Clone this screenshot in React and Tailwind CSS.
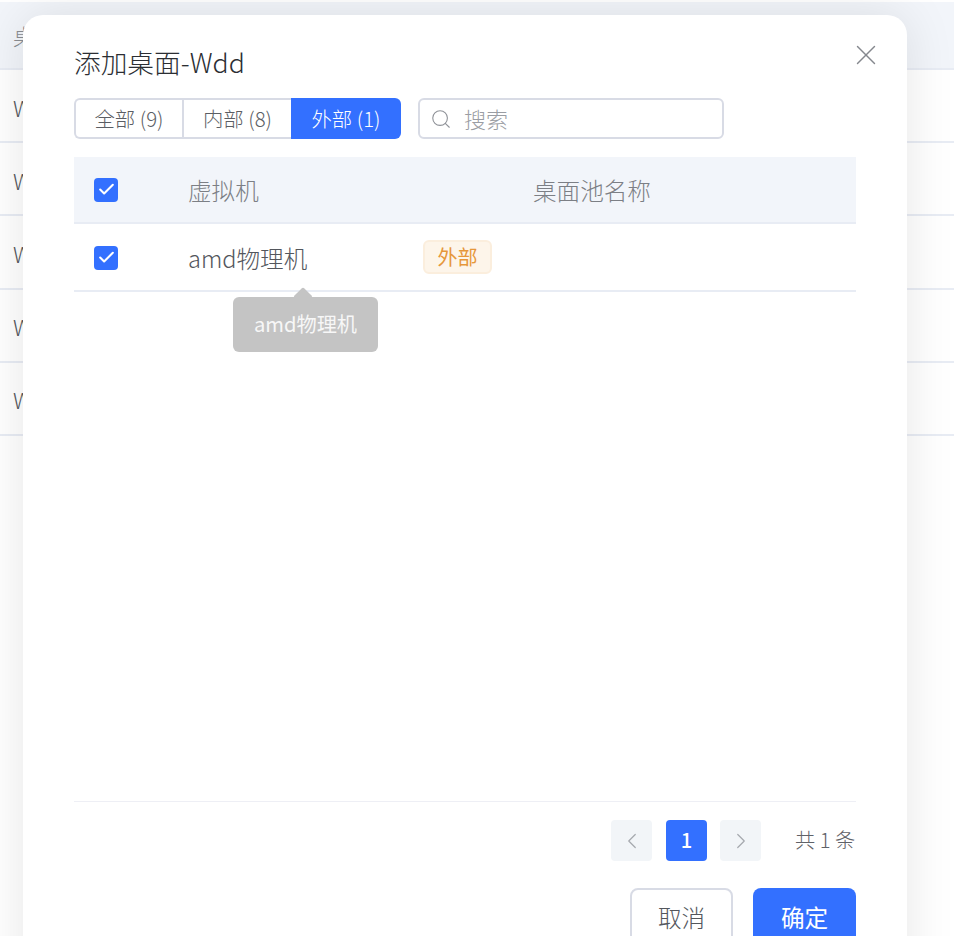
import { Check, ChevronLeft, ChevronRight, Search, X } from 'lucide-react';

const font = { fontFamily: '"Noto Sans CJK SC", "Noto Sans", sans-serif' };

function Box() {
  return (
    <span className="flex h-6 w-6 items-center justify-center rounded-[4px] bg-[#3370ff]">
      <Check size={19} strokeWidth={2.6} className="text-white" />
    </span>
  );
}

export default function App() {
  return (
    <div style={font} className="relative h-[936px] w-[954px] overflow-hidden bg-white font-light">
      {/* table behind the dialog */}
      <div className="pt-[2px] text-[22px] text-[#55585e]">
        <div className="flex h-[68px] items-center border-b-2 border-[#e8ecf4] bg-[#f2f5fa] pl-[13px] text-[#8a8d93]">桌面</div>
        {[0, 1, 2, 3, 4].map((i) => (
          <div key={i} className="flex h-[73.2px] items-center border-b-2 border-[#e8ecf4] pl-[13px] pt-[3px]">Wdd</div>
        ))}
      </div>

      <div className="absolute left-[23px] top-[15px] flex h-[985px] w-[884px] flex-col rounded-[20px] bg-white px-[51px] pt-[28px] shadow-[0_0_50px_rgba(0,0,0,0.1)]">
        <X size={34} strokeWidth={1} className="absolute right-[24px] top-[23px] text-[#85888e]" />
        <h1 className="h-[40px] text-[26.7px] leading-[38px] font-light text-[#2b2e33]">添加桌面-Wdd</h1>

        <div className="mt-[15px] flex items-center">
          <div className="flex h-[41px] text-[20.4px] text-[#5b5e64]">
            <div className="flex w-[108px] items-center justify-center rounded-l-[6px] border-y-2 border-l-2 border-[#d8dbe5]">全部 (9)</div>
            <div className="flex w-[109px] items-center justify-center border-y-2 border-l-2 border-[#d8dbe5]">内部 (8)</div>
            <div className="flex w-[110px] items-center justify-center rounded-r-[6px] bg-[#3370ff] text-white">外部 (1)</div>
          </div>
          <div className="ml-[17px] flex h-[41px] w-[306px] items-center rounded-[6px] border-2 border-[#d8dbe5] pl-[10px] text-[22px] text-[#9a9da3]">
            <Search size={22} strokeWidth={1.2} className="text-[#8f9298]" />
            <span className="ml-[12px]">搜索</span>
          </div>
        </div>

        <div className="mt-[18px] flex min-h-0 flex-1 flex-col">
          <div className="grid h-[67px] shrink-0 grid-cols-[114px_345px_1fr] items-center border-b-2 border-[#e8ecf4] bg-[#f2f5fa] text-[23.6px] text-[#7c7f85]">
            <div className="pl-[20px]"><Box /></div>
            <div className="pt-[2px]">虚拟机</div>
            <div className="pt-[2px]">桌面池名称</div>
          </div>
          <div className="relative grid h-[68px] shrink-0 grid-cols-[114px_1fr] items-center border-b-2 border-[#e8ecf4]">
            <div className="pl-[20px] pt-[1px]"><Box /></div>
            <div className="flex items-center text-[23.6px] text-[#53565c]">
              <span className="w-[235px] pt-[4px]">amd物理机</span>
              <span className="flex h-[34px] w-[69px] items-center justify-center rounded-[6px] border-2 border-[#fbeedd] bg-[#fdf5ea] text-[20px] font-normal text-[#e6973a]">外部</span>
            </div>
            {/* tooltip */}
            <div className="absolute left-[159px] top-[73px] flex h-[55px] w-[145px] items-center justify-center rounded-[6px] bg-[#c4c4c4] text-[20.2px] font-normal text-[#f7f7f7]">
              <span className="absolute left-[63px] top-[-7px] h-[14px] w-[14px] rotate-45 rounded-[2px] bg-[#c4c4c4]" />
              <span className="relative">amd物理机</span>
            </div>
          </div>
        </div>

        <div className="shrink-0 border-t border-[#eeeff5] pt-[18px]">
          <div className="flex items-center justify-end text-[20.2px] text-[#5f6268]">
            <span className="flex h-[41px] w-[41px] items-center justify-center rounded-[4px] bg-[#f2f5f8]">
              <ChevronLeft size={26} strokeWidth={1.1} className="text-[#a5a8ae]" />
            </span>
            <span className="ml-[14px] flex h-[41px] w-[41px] items-center justify-center rounded-[4px] bg-[#3370ff] font-medium text-white">1</span>
            <span className="ml-[13px] flex h-[41px] w-[41px] items-center justify-center rounded-[4px] bg-[#f2f5f8]">
              <ChevronRight size={26} strokeWidth={1.1} className="text-[#a5a8ae]" />
            </span>
            <span className="ml-[34px] w-[61px] whitespace-nowrap">共 1 条</span>
          </div>
          <div className="mb-[52px] mt-[27px] flex justify-end gap-[20px] text-[23.6px]">
            <button className="h-[60px] w-[103px] rounded-[8px] border-2 border-[#d8dbe5] bg-white text-[#53565c]">取消</button>
            <button className="h-[60px] w-[103px] rounded-[8px] bg-[#3370ff] font-normal text-white">确定</button>
          </div>
        </div>
      </div>
    </div>
  );
}
